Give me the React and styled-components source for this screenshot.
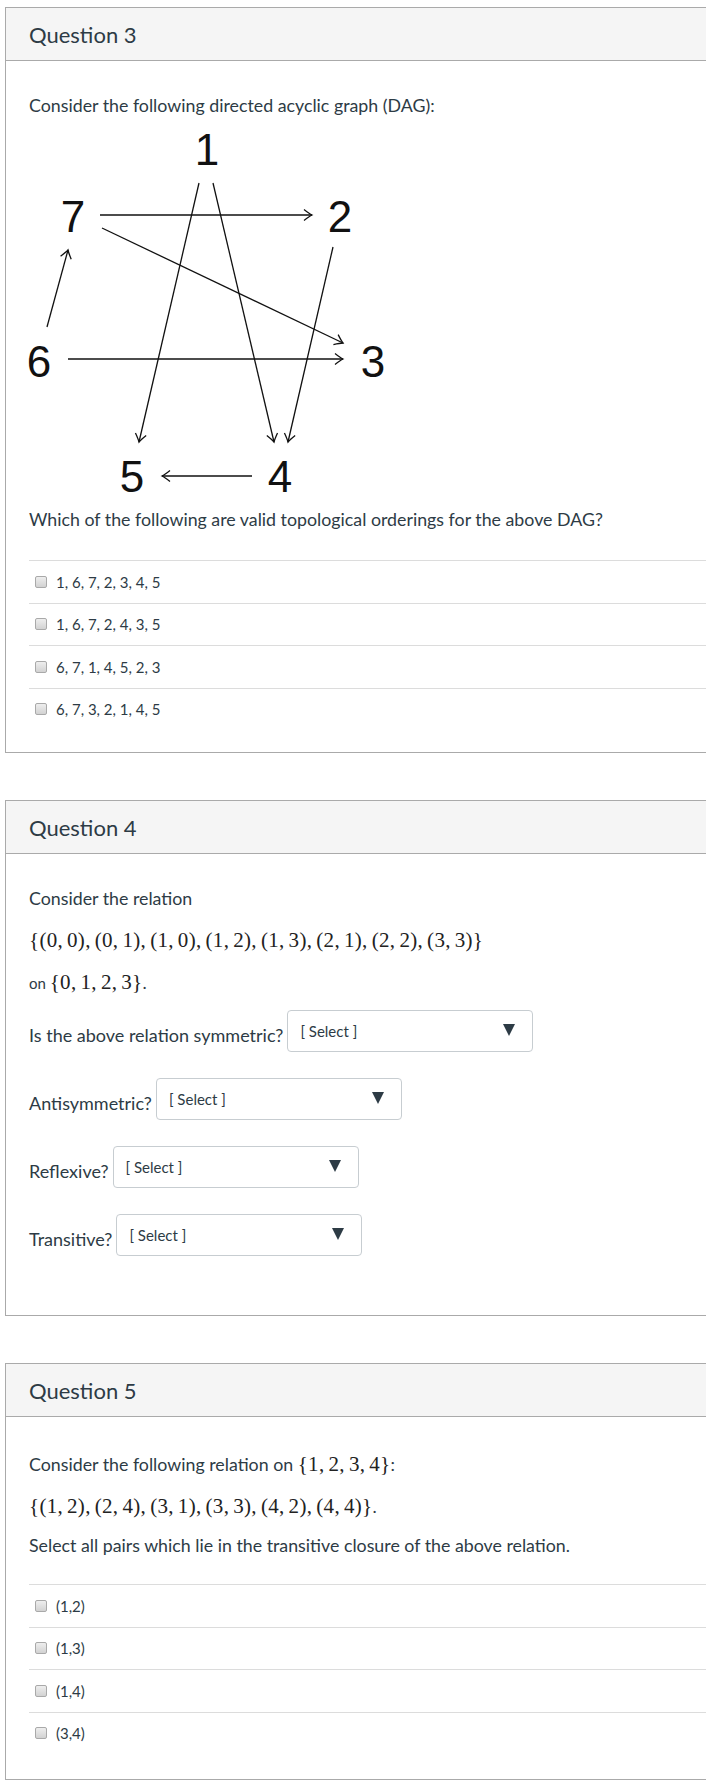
import React from 'react';
import styled, { createGlobalStyle } from 'styled-components';

const GlobalStyle = createGlobalStyle`
  html, body {
    margin: 0;
    padding: 0;
    background: #fff;
    overflow-x: hidden;
  }
  body {
    font-family: Lato, "Liberation Sans", sans-serif;
    color: #2d3b45;
  }
`;

const Page = styled.div`
  display: flex;
  flex-direction: column;
  gap: 47px;
  padding: 7px 0 6px 5px;
  overflow: hidden;
`;

const Card = styled.section`
  width: 740px;
  box-sizing: border-box;
  border: 1px solid #aaaaaa;
`;

const Header = styled.div`
  height: 52px;
  display: flex;
  align-items: center;
  padding-left: 23px;
  background: #f5f5f5;
  border-bottom: 1px solid #aaaaaa;

  h2 {
    margin: 0;
    font-size: 22px;
    font-weight: 400;
    color: #2d3b45;
  }
`;

const Body = styled.div`
  display: flex;
  flex-direction: column;
  align-items: flex-start;
  padding: ${p => p.$top}px 0 ${p => p.$bottom}px 23px;
`;

const Paragraph = styled.p`
  margin: 0 0 ${p => (p.$mb ?? 12)}px;
  font-size: 17.8px;
  line-height: 30px;
  white-space: nowrap;
`;

const Small = styled.span`
  font-size: 15px;
`;

const Math = styled.span`
  font-family: "Liberation Serif", "DejaVu Serif", serif;
  font-size: 21px;
  line-height: 0;
  letter-spacing: 0.3px;
  word-spacing: -1.5px;
  color: #222;
`;

const Diagram = styled.svg`
  display: block;
  overflow: visible;
`;

const AnswerList = styled.ul`
  list-style: none;
  margin: ${p => (p.$mt ?? 12)}px 0 0;
  padding: 0;
  align-self: stretch;
`;

const Answer = styled.li`
  display: flex;
  align-items: center;
  gap: 9px;
  min-height: 41.5px;
  padding-left: 6px;
  border-top: 1px solid #dcdcdc;
  font-size: 15px;
`;

const Checkbox = styled.span`
  width: 12px;
  height: 12px;
  box-sizing: border-box;
  border: 1px solid #a9a9a9;
  border-radius: 2px;
  background: linear-gradient(#eeeeee, #d2d2d2);
`;

const SelectList = styled.div`
  display: flex;
  flex-direction: column;
  gap: 26px;
`;

const SelectRow = styled.div`
  display: flex;
  align-items: flex-end;
  gap: 4px;
`;

const SelectLabel = styled.span`
  font-size: 18px;
  line-height: 24px;
  padding-bottom: 5px;
`;

const SelectBox = styled.div`
  width: 246px;
  height: 42px;
  box-sizing: border-box;
  display: flex;
  align-items: center;
  justify-content: space-between;
  padding: 0 17px 0 12px;
  background: #fff;
  border: 1px solid #c7cdd1;
  border-radius: 4px;
  font-size: 15px;
  color: #2d3b45;
`;

const Caret = styled.span`
  width: 0;
  height: 0;
  margin-top: -2px;
  border-left: 6px solid transparent;
  border-right: 6px solid transparent;
  border-top: 12px solid #2d3b45;
`;

const nodes = [
  ['1', 178, 45],
  ['7', 44, 112],
  ['2', 311, 112],
  ['6', 10, 257],
  ['3', 344, 257],
  ['5', 103, 372],
  ['4', 251, 372],
];

const edges = [
  [71, 95, 283, 95],
  [73, 108, 314, 223],
  [18, 207, 39, 130],
  [39, 239, 314, 239],
  [170, 63, 110, 322],
  [184, 63, 245, 322],
  [304, 127, 259, 322],
  [223, 356, 133, 356],
];

function Dag() {
  return (
    <Diagram width="380" height="384" viewBox="0 0 380 384">
      <defs>
        <marker
          id="tip"
          viewBox="-10 -7 12 14"
          markerWidth="12"
          markerHeight="14"
          refX="0"
          refY="0"
          orient="auto"
          markerUnits="userSpaceOnUse"
        >
          <path
            d="M -8 -5.5 C -4 -2.4 -1 -0.5 0 0 C -1 0.5 -4 2.4 -8 5.5"
            fill="none"
            stroke="#111"
            strokeWidth="1.3"
          />
        </marker>
      </defs>
      {edges.map(([x1, y1, x2, y2], i) => (
        <line
          key={i}
          x1={x1}
          y1={y1}
          x2={x2}
          y2={y2}
          stroke="#111"
          strokeWidth="1.3"
          markerEnd="url(#tip)"
        />
      ))}
      {nodes.map(([label, x, y]) => (
        <text
          key={label}
          x={x}
          y={y}
          textAnchor="middle"
          fontFamily='"Liberation Sans", Arial, sans-serif'
          fontSize="44"
          fill="#111"
        >
          {label}
        </text>
      ))}
    </Diagram>
  );
}

const orderings = ['1, 6, 7, 2, 3, 4, 5', '1, 6, 7, 2, 4, 3, 5', '6, 7, 1, 4, 5, 2, 3', '6, 7, 3, 2, 1, 4, 5'];
const pairs = ['(1,2)', '(1,3)', '(1,4)', '(3,4)'];
const properties = ['Is the above relation symmetric?', 'Antisymmetric?', 'Reflexive?', 'Transitive?'];

function Answers({ items, mt }) {
  return (
    <AnswerList $mt={mt}>
      {items.map(item => (
        <Answer key={item}>
          <Checkbox />
          <span>{item}</span>
        </Answer>
      ))}
    </AnswerList>
  );
}

export default function App() {
  return (
    <>
      <GlobalStyle />
      <Page>
        <Card>
          <Header>
            <h2>Question 3</h2>
          </Header>
          <Body $top={29} $bottom={22}>
            <Paragraph $mb={0}>Consider the following directed acyclic graph (DAG):</Paragraph>
            <Dag />
            <Paragraph>Which of the following are valid topological orderings for the above DAG?</Paragraph>
            <Answers items={orderings} mt={14} />
          </Body>
        </Card>

        <Card>
          <Header>
            <h2>Question 4</h2>
          </Header>
          <Body $top={29} $bottom={59}>
            <Paragraph>Consider the relation</Paragraph>
            <Paragraph>
              <Math>{'{(0, 0), (0, 1), (1, 0), (1, 2), (1, 3), (2, 1), (2, 2), (3, 3)}'}</Math>
            </Paragraph>
            <Paragraph>
              <Small>on </Small>
              <Math>{'{0, 1, 2, 3}'}</Math>.
            </Paragraph>
            <SelectList>
              {properties.map(label => (
                <SelectRow key={label}>
                  <SelectLabel>{label}</SelectLabel>
                  <SelectBox>
                    <span>[ Select ]</span>
                    <Caret />
                  </SelectBox>
                </SelectRow>
              ))}
            </SelectList>
          </Body>
        </Card>

        <Card>
          <Header>
            <h2>Question 5</h2>
          </Header>
          <Body $top={32} $bottom={25}>
            <Paragraph>
              Consider the following relation on <Math>{'{1, 2, 3, 4}'}</Math>:
            </Paragraph>
            <Paragraph $mb={9}>
              <Math>{'{(1, 2), (2, 4), (3, 1), (3, 3), (4, 2), (4, 4)}'}</Math>.
            </Paragraph>
            <Paragraph>Select all pairs which lie in the transitive closure of the above relation.</Paragraph>
            <Answers items={pairs} />
          </Body>
        </Card>
      </Page>
    </>
  );
}
